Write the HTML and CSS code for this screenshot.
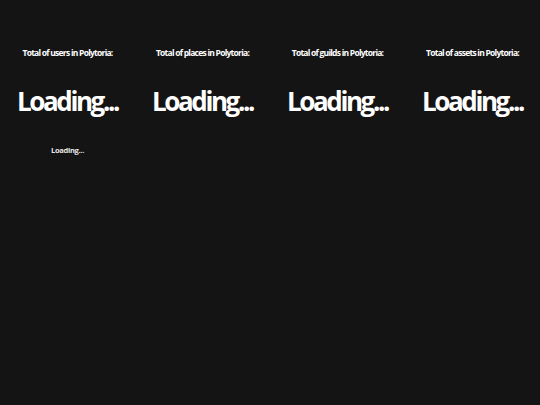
FILE: index.html
```html
<!DOCTYPE html>
<html>
<head>
<meta charset="utf-8">
<link rel="stylesheet" href="styles.css">
</head>
<body>
<div class="stats">
  <div class="stat">
    <div class="label">Total of users in Polytoria:</div>
    <div class="value">Loading...</div>
  </div>
  <div class="stat">
    <div class="label">Total of places in Polytoria:</div>
    <div class="value">Loading...</div>
  </div>
  <div class="stat">
    <div class="label">Total of guilds in Polytoria:</div>
    <div class="value">Loading...</div>
  </div>
  <div class="stat">
    <div class="label">Total of assets in Polytoria:</div>
    <div class="value">Loading...</div>
  </div>
</div>
<div class="extra">
  <div class="sub">Loading...</div>
</div>
</body>
</html>
```
FILE: styles.css
```css
html, body {
  margin: 0;
  padding: 0;
  background: #141414;
  color: #ffffff;
  font-family: "Open Sans", "DejaVu Sans", sans-serif;
  font-weight: 700;
}
.stats {
  display: grid;
  grid-template-columns: repeat(4, 1fr);
  padding-top: 48px;
}
.stat {
  display: flex;
  flex-direction: column;
  align-items: center;
  text-align: center;
}
.label {
  font-size: 8.5px;
  line-height: 10px;
  letter-spacing: -0.75px;
}
.value {
  margin-top: 28px;
  font-size: 26px;
  line-height: 30px;
  letter-spacing: -2.4px;
}
.extra {
  display: grid;
  grid-template-columns: repeat(4, 1fr);
  padding-top: 29px;
}
.sub {
  text-align: center;
  font-size: 7.5px;
  line-height: 10px;
  letter-spacing: -0.3px;
  color: #e6e6e6;
}
```
